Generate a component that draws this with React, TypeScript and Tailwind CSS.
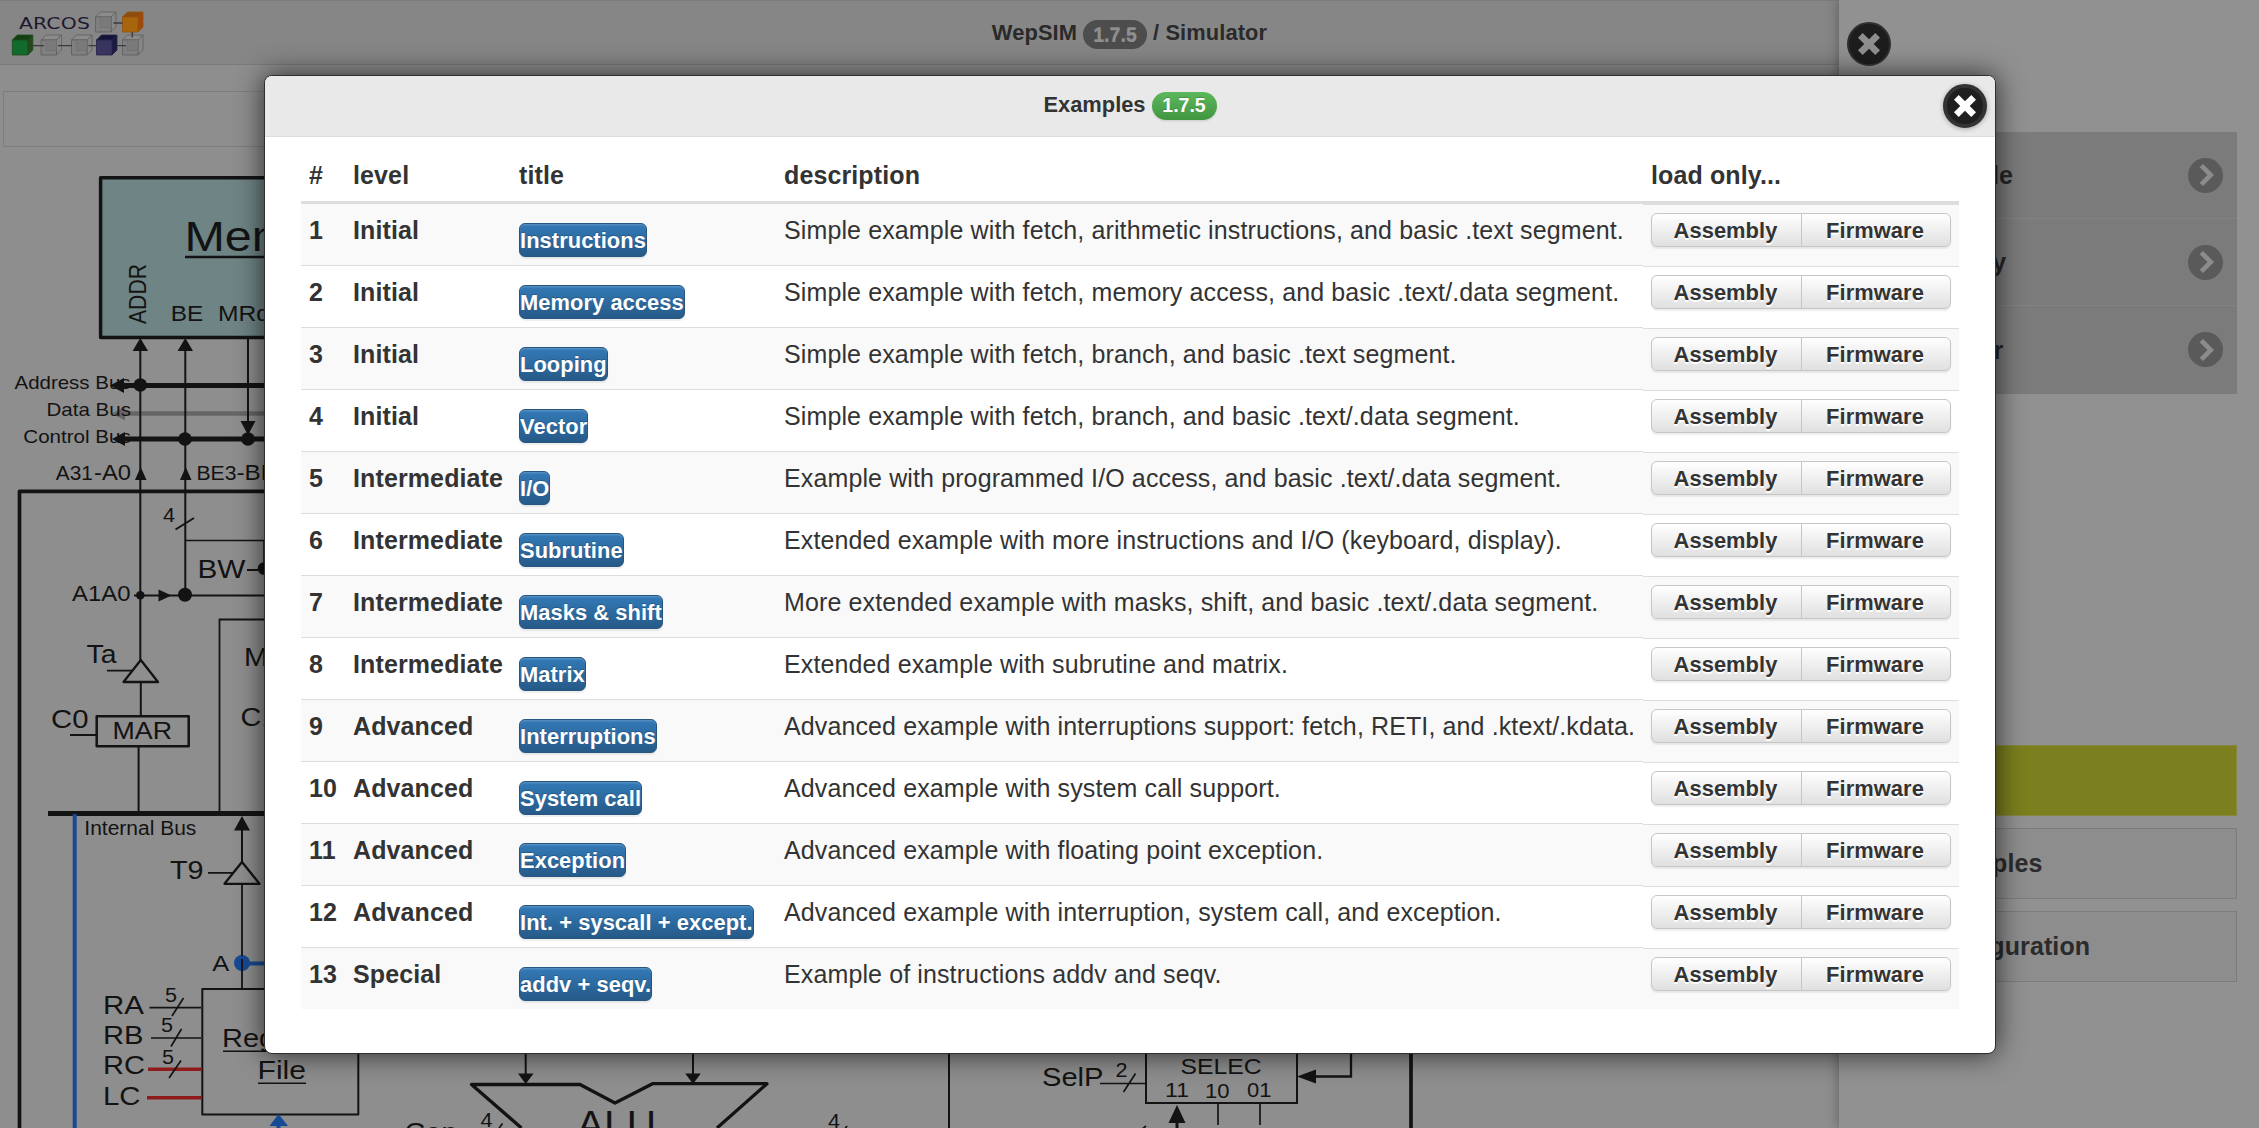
import React from "react";

type Example = { level: string; title: string; description: string };

const EXAMPLES: Example[] = [
  { level: "Initial", title: "Instructions", description: "Simple example with fetch, arithmetic instructions, and basic .text segment." },
  { level: "Initial", title: "Memory access", description: "Simple example with fetch, memory access, and basic .text/.data segment." },
  { level: "Initial", title: "Looping", description: "Simple example with fetch, branch, and basic .text segment." },
  { level: "Initial", title: "Vector", description: "Simple example with fetch, branch, and basic .text/.data segment." },
  { level: "Intermediate", title: "I/O", description: "Example with programmed I/O access, and basic .text/.data segment." },
  { level: "Intermediate", title: "Subrutine", description: "Extended example with more instructions and I/O (keyboard, display)." },
  { level: "Intermediate", title: "Masks & shift", description: "More extended example with masks, shift, and basic .text/.data segment." },
  { level: "Intermediate", title: "Matrix", description: "Extended example with subrutine and matrix." },
  { level: "Advanced", title: "Interruptions", description: "Advanced example with interruptions support: fetch, RETI, and .ktext/.kdata." },
  { level: "Advanced", title: "System call", description: "Advanced example with system call support." },
  { level: "Advanced", title: "Exception", description: "Advanced example with floating point exception." },
  { level: "Advanced", title: "Int. + syscall + except.", description: "Advanced example with interruption, system call, and exception." },
  { level: "Special", title: "addv + seqv.", description: "Example of instructions addv and seqv." },
];

const INK = "#131313";
const BLUE = "#174a94";
const RED = "#8e1a1a";

function Cube({ x, y, front, top, side, line }: { x: number; y: number; front: string; top: string; side: string; line: string }) {
  return (
    <g stroke={line} strokeWidth={0.8} strokeLinejoin="round">
      <path d={`M${x} ${y}l5-5h15.5l-5 5z`} fill={top} />
      <path d={`M${x + 15.5} ${y}l5-5v15l-5 5z`} fill={side} />
      <rect x={x} y={y} width={15.5} height={15} fill={front} />
    </g>
  );
}

function GlassCube({ x, y }: { x: number; y: number }) {
  return (
    <g>
      <Cube x={x} y={y} front="#7f7f7f" top="#8b8b8b" side="#868686" line="#5e5e5e" />
      <rect x={x + 5} y={y} width={10.5} height={10.5} fill="#7a7a7a" stroke="#6e6e6e" strokeWidth={0.6} />
    </g>
  );
}

function Logo() {
  return (
    <svg width="150" height="64" viewBox="0 0 150 64" className="block">
      <text x="19" y="29.3" fontSize="15.5" fontWeight="400" textLength="71" lengthAdjust="spacingAndGlyphs" fill="#1c1930" fontFamily="DejaVu Sans, sans-serif">ARCOS</text>
      <GlassCube x={95.5} y={17} />
      <Cube x={122.5} y={17} front="#a8650c" top="#8d4d0e" side="#a1480c" line="#96500f" />
      <GlassCube x={122.5} y={40} />
      <Cube x={96.5} y={40} front="#37345f" top="#15133a" side="#1c1a42" line="#23214a" />
      <GlassCube x={71.5} y={40} />
      <GlassCube x={41} y={40} />
      <Cube x={12.3} y={40} front="#116b2c" top="#143f12" side="#28481c" line="#1a4a1c" />
      <path d="M113.5 23H122.5M132.3 32V37.500M32.500 45.700H44M58 45.700H72M88.500 45.700H96.500M116.500 45.700H126" stroke="#3a3a3a" strokeWidth="1.3" />
    </svg>
  );
}

function T({ x, y, s, w, children }: { x: number; y: number; s: number; w?: number; children: string }) {
  return (
    <text x={x} y={y} fontSize={s} textLength={w} lengthAdjust="spacingAndGlyphs">
      {children}
    </text>
  );
}

function Datapath() {
  return (
    <svg width="1839" height="968" viewBox="0 160 1839 968" className="block" fill="none" stroke={INK} strokeWidth={2} fontFamily="Liberation Sans, Arial, sans-serif">
      {/* main memory */}
      <rect x="100.600" y="177.800" width="500" height="159.700" strokeWidth="3.500" fill="#6f8485" strokeLinejoin="round" />
      <path d="M185 257H300" strokeWidth="2.500" />

      {/* external data bus */}
      <path d="M124 413.500H300" stroke="#666" strokeWidth="4.500" />
      <path d="M112 413.500L125 406.500V420.500Z" fill="#666" stroke="none" />

      <g fill={INK} stroke="none">
        <T x={184.5} y={250.5} s={42.5} w={175}>Memory</T>
        <text transform="translate(145.500 324) rotate(-90)" fontSize="24" textLength="60" lengthAdjust="spacingAndGlyphs">ADDR</text>
        <T x={170.8} y={321} s={22.5} w={32.5}>BE</T>
        <T x={218} y={321} s={22.5} w={52}>MRd</T>
        <T x={14.5} y={389} s={19} w={116}>Address Bus</T>
        <T x={46.5} y={416} s={19} w={84.5}>Data Bus</T>
        <T x={23.3} y={443} s={19} w={107.5}>Control Bus</T>
        <T x={55.8} y={480} s={19.5} w={37}>A31</T>
        <T x={94} y={480} s={22.5} w={37}>-A0</T>
        <T x={196.5} y={480} s={19.5} w={40}>BE3</T>
        <T x={236.5} y={480} s={22.5} w={54}>-BE0</T>
        <T x={163} y={522} s={20} w={12}>4</T>
        <T x={197.5} y={577.7} s={26} w={48}>BW</T>
        <T x={72} y={600.7} s={22} w={58.5}>A1A0</T>
        <T x={244} y={665.7} s={26} w={64}>MBR</T>
        <T x={240.5} y={725.5} s={26} w={37}>C1</T>
        <T x={86.5} y={663} s={26} w={30}>Ta</T>
        <T x={51} y={727.7} s={26} w={37.5}>C0</T>
        <T x={112.5} y={739} s={23.5} w={59.5}>MAR</T>
        <T x={84.3} y={835} s={20} w={112}>Internal Bus</T>
        <T x={170} y={878.7} s={26} w={33.5}>T9</T>
        <T x={212.3} y={970.7} s={22} w={17}>A</T>
        <T x={222} y={1046.7} s={26} w={108}>Register</T>
        <T x={257.5} y={1078.7} s={26} w={48.5}>File</T>
        <T x={103} y={1013.7} s={26} w={41}>RA</T>
        <T x={103} y={1043.7} s={26} w={40.5}>RB</T>
        <T x={103} y={1073.7} s={26} w={42}>RC</T>
        <T x={103} y={1105} s={26} w={37.5}>LC</T>
        <T x={165} y={1002} s={19.5} w={12}>5</T>
        <T x={161} y={1032} s={19.5} w={12}>5</T>
        <T x={162} y={1064} s={19.5} w={12}>5</T>
        <T x={404.5} y={1141} s={26} w={53}>Cop</T>
        <T x={480.5} y={1127} s={20} w={12}>4</T>
        <T x={828} y={1128} s={20} w={12}>4</T>
        <T x={577} y={1138} s={39} w={79}>ALU</T>
        <T x={1042} y={1085.7} s={26} w={61.5}>SelP</T>
        <T x={1115.5} y={1077} s={20} w={12}>2</T>
        <T x={1180.5} y={1074} s={22} w={81}>SELEC</T>
        <T x={1165} y={1097} s={20.5} w={24}>11</T>
        <T x={1205} y={1098} s={20.5} w={24.5}>10</T>
        <T x={1247} y={1097} s={20.5} w={24.5}>01</T>
      </g>

      {/* address and control buses */}
      <path d="M122 385.500H300M122 439H300" strokeWidth="5" />
      <path d="M140.300 345V660M185.300 345V595M248 338V425" />
      <g fill={INK} stroke="none">
        <path d="M110 385.500L124 378V393ZM112 439L125 432V446Z" />
        <path d="M140.300 338L148 351H132.600ZM185.300 338L193 351H177.600ZM248 435L240.500 421H255.500Z" />
        <path d="M140.700 467L146.500 480H135ZM185.700 467L191.500 480H180Z" />
        <circle cx="140.300" cy="385" r="6.800" />
        <circle cx="185" cy="439" r="6.800" />
        <circle cx="248" cy="439" r="6.800" />
        <circle cx="140.300" cy="595.300" r="4.300" />
        <circle cx="185" cy="594.700" r="7" />
        <circle cx="264" cy="568.500" r="6.300" />
        <path d="M158.500 589.500L171.500 595.500L158.500 601.500Z" />
      </g>

      {/* processor outline */}
      <path d="M19.500 1128V491.300H1411V1128" strokeWidth="3.700" strokeLinejoin="round" />
      <path d="M175.500 529.500L194 518" />
      <path d="M185.300 540.400H264V570" strokeWidth="1.500" />
      <path d="M247 570H258M134 595.500H300" />
      <path d="M219.500 813V619.500H300" strokeWidth="1.800" />
      <path d="M107 670.700H132M70 735H96M208 872.800H233" strokeWidth="1.800" />
      <path d="M140.800 660L158 682H123.500ZM242 862L259.500 883.800H224.500Z" strokeWidth="2.300" strokeLinejoin="round" />
      <path d="M140.800 682V716M138.600 747V813" />
      <rect x="96.700" y="716.300" width="92" height="30" strokeWidth="2.500" strokeLinejoin="round" />
      <path d="M48 813.500H300" strokeWidth="5" />
      <path d="M74.700 814V1128" stroke={BLUE} strokeWidth="4" />
      <path d="M242 816L250 830.500H234Z" fill={INK} stroke="none" />
      <path d="M242 828V862" />

      {/* register file */}
      <path d="M242 963.500H300" stroke={BLUE} strokeWidth="4" />
      <circle cx="242" cy="963" r="8" fill={BLUE} stroke="none" />
      <path d="M242 884V956M242 959V989" strokeWidth="1.800" />
      <rect x="202.300" y="989" width="156" height="125.500" strokeLinejoin="round" />
      <path d="M223 1051.300H320M258 1083.200H306" strokeWidth="1.500" />
      <path d="M149.500 1007.700H201M151 1038H201" strokeWidth="1.700" />
      <path d="M148 1069.200H202M147 1097.800H202" stroke={RED} strokeWidth="3.600" />
      <path d="M172 1016L183.500 998M171 1046.500L181.500 1029M169 1078L181 1060.500" strokeWidth="1.700" />
      <path d="M278.500 1114L288 1126H269.500Z" fill={BLUE} stroke="none" />
      <path d="M278.500 1124V1128" stroke={BLUE} strokeWidth="4" />

      {/* ALU */}
      <path d="M521.500 1128L471.500 1084.500H580L615 1103L652.500 1083.700H767L717 1128" strokeWidth="3.300" strokeLinejoin="round" />
      <path d="M525.700 1040V1075M693 1040V1075M949 1040V1128" />
      <path d="M525.700 1084L518 1073.500H533.500ZM693 1084L685.200 1073.500H700.800Z" fill={INK} stroke="none" />
      <path d="M495 1134L502.500 1123.500M840 1136L847 1126M1141 1130L1146 1126" strokeWidth="1.700" />

      {/* status selector */}
      <rect x="1146" y="1000" width="151" height="103" />
      <path d="M1100 1083.500H1146M1123.500 1092L1135.500 1073.500M1218 1103V1125M1260 1103V1125" strokeWidth="1.700" />
      <path d="M1312 1076.500H1351V1040" strokeWidth="2.300" />
      <path d="M1297 1076.500L1316 1069.500V1083.500ZM1177 1105L1185.500 1123H1168.500Z" fill={INK} stroke="none" />
      <path d="M1177 1120V1128" strokeWidth="3" />
    </svg>
  );
}

function CloseIcon({ color }: { color: string }) {
  return (
    <svg width="22" height="22" viewBox="0 0 14 14" className="block">
      <polygon fill={color} points="14,3 11,0 7,4 3,0 0,3 4,7 0,11 3,14 7,10 11,14 14,11 10,7" />
    </svg>
  );
}

function MenuItem({ label }: { label: string }) {
  return (
    <div className="flex h-[87px] items-center justify-between border-b border-[#838383] pr-[14px] pl-[25px] last:border-b-0">
      <span className="text-[25px] leading-9 font-bold text-[#262626]">{label}</span>
      <span className="flex size-[35px] items-center justify-center rounded-full bg-[#5a5a5a]">
        <svg width="22" height="22" viewBox="0 0 14 14" className="block">
          <polygon fill="#8c8c8c" points="3,2.100 7.900,7 3,11.900 5.100,14 12.100,7 5.100,0" />
        </svg>
      </span>
    </div>
  );
}

function SidePanel() {
  return (
    <aside className="absolute inset-y-0 right-0 flex w-[420px] flex-col bg-[#919191] pr-[22px] pl-[24px] shadow-[0_0_12px_rgba(0,0,0,0.35)]">
      <div className="mt-[22px] -ml-4 flex size-11 items-center justify-center rounded-full border-2 border-[#303030] bg-[#1d1d1d]">
        <CloseIcon color="#8f8f8f" />
      </div>
      <div className="mt-[66px] flex h-[262px] flex-col bg-[#7b7b7b]">
        <MenuItem label="Microcode" />
        <MenuItem label="Assembly" />
        <MenuItem label="Simulator" />
      </div>
      <div className="mt-[351px] h-[71px] border border-[#858640] bg-[#7b7f1e]" />
      <div className="mt-3 flex h-[71px] items-center border border-[#7c7c7c] bg-[#8d8d8d] pl-[61px] text-[25px] font-bold tracking-[0.1px] text-[#2b2b2b]">Examples</div>
      <div className="mt-3 flex h-[71px] items-center border border-[#7c7c7c] bg-[#8d8d8d] pt-px pl-[61px] text-[25px] font-bold tracking-[0.1px] text-[#2b2b2b]">Configuration</div>
    </aside>
  );
}

function ExamplesTable() {
  return (
    <div className="mt-3 flex w-[1658px] text-[25px] leading-9 tracking-[0.118px] text-[#333]">
      <div className="w-[1342px]">
        <div className="grid h-[55px] grid-cols-[44px_166px_265px_867px] border-b-[3px] border-[#ddd] pt-2 font-bold">
          <span className="pl-2">#</span>
          <span className="pl-2">level</span>
          <span className="pl-2">title</span>
          <span className="pl-2">description</span>
        </div>
        {EXAMPLES.map((e, i) => (
          <div
            key={e.title}
            className="grid h-[62px] grid-cols-[44px_166px_265px_867px] border-b border-[#ddd] whitespace-nowrap odd:bg-white even:bg-[#f9f9f9] last:h-[61px] last:border-b-0"
          >
            <span className="pt-2 pl-2 font-bold">{i + 1}</span>
            <span className="pt-2 pl-2 font-bold">{e.level}</span>
            <span className="flex items-start pt-[19px] pl-2">
              <span className="h-[34px] rounded-[6px] border border-[#265680] bg-linear-to-b from-[#337ab7] to-[#265a88] text-[21.875px] leading-[34px] font-bold tracking-[0.07px] text-white shadow-[inset_0_1.500px_0_rgba(255,255,255,0.15),0_1.500px_1.500px_rgba(0,0,0,0.075)] [text-shadow:0_-1px_0_rgba(0,0,0,0.2)]">
                {e.title}
              </span>
            </span>
            <span className="pt-2 pl-2">{e.description}</span>
          </div>
        ))}
      </div>
      <div className="w-[316px]">
        <div className="h-14 border-b-4 border-[#ddd] pt-2 pl-2 font-bold">load only...</div>
        {EXAMPLES.map((e) => (
          <div key={e.title} className="h-[62px] border-b border-[#ddd] pt-2 pl-2 odd:bg-white even:bg-[#f9f9f9] last:h-[60px] last:border-b-0">
            <div className="flex h-[34px] w-[300px] rounded-[6px] border border-[#c6c6c6] bg-linear-to-b from-white to-[#e0e0e0] text-center text-[21.875px] leading-[34px] font-bold tracking-[0.07px] shadow-[0_1.500px_1.500px_rgba(0,0,0,0.075)] [text-shadow:0_1.500px_0_#fff]">
              <span className="w-[149px] pr-[2px]">Assembly</span>
              <span className="h-8 w-[149px] border-l-[1.500px] border-[#c6c6c6] pr-[2px]">Firmware</span>
            </div>
          </div>
        ))}
      </div>
    </div>
  );
}

export default function App() {
  return (
    <div className="relative h-[1128px] w-[2259px] overflow-hidden bg-[#8e8e8e] font-['Liberation_Sans',Arial,sans-serif]">
      <header className="relative flex h-[65px] justify-center border-t border-b border-t-[#7c7c7c] border-b-[#7b7b7b] bg-[#868686] text-[21.875px] leading-7 font-bold tracking-[0.1px] text-[#2a2a2a]">
        <div className="absolute top-[-1px] left-0">
          <Logo />
        </div>
        <div className="flex items-start gap-[6px] pt-[18px]">
          <span>WepSIM</span>
          <span className="mt-px h-[29px] w-[64px] rounded-full bg-[#4d4d4d] text-center text-[19.5px] leading-[30px] text-[#8f8f8f] [text-shadow:0_-1px_0_#7c7c7c]">1.7.5</span>
          <span>/ Simulator</span>
        </div>
      </header>
      <div className="mt-[26px] ml-[3px] h-[56px] w-[1830px] border border-[#7e7e7e]" />
      <div className="mt-[13px]">
        <Datapath />
      </div>
      <SidePanel />

      <div className="absolute top-[75px] left-[264px] h-[979px] w-[1732px] rounded-lg border border-[#2f2f2f] bg-white shadow-[0_0_28px_rgba(0,0,0,0.7)]">
        <div className="relative flex h-[61px] justify-center gap-[6px] rounded-t-[7px] border-b border-[#ddd] bg-[#e9e9e9] pt-[15px] text-[21.875px] leading-7 font-bold text-[#333]">
          <span>Examples</span>
          <span className="mt-px h-7 w-[65px] rounded-full bg-linear-to-b from-[#5cb85c] to-[#419641] text-center text-[19.5px] leading-[27px] text-white shadow-[0_1.500px_1.500px_rgba(0,0,0,0.1)] [text-shadow:0_-1.500px_0_rgba(0,0,0,0.2)]">1.7.5</span>
          <div className="absolute top-2 right-2 flex size-11 items-center justify-center rounded-full border-[4px] border-[#333] bg-[#1f1f1f] shadow-[0_1px_5px_rgba(0,0,0,0.3)]">
            <CloseIcon color="#fff" />
          </div>
        </div>
        <div className="px-9">
          <ExamplesTable />
        </div>
      </div>
    </div>
  );
}
